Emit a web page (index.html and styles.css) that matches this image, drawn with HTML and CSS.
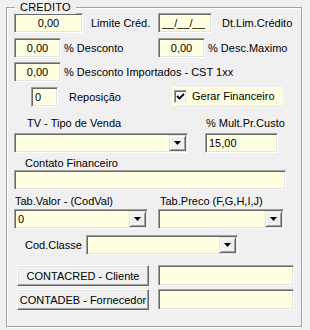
FILE: index.html
```html
<!DOCTYPE html>
<html>
<head>
<meta charset="utf-8">
<link rel="stylesheet" href="styles.css">
</head>
<body>
<div class="group">
  <span class="legend">CREDITO</span>

  <div class="row r1 split">
    <div class="cell">
      <div class="field center w69">0,00</div>
      <span class="lbl ml8">Limite Créd.</span>
    </div>
    <div class="cell">
      <div class="field w54">__/__/__</div>
      <span class="lbl ml10">Dt.Lim.Crédito</span>
    </div>
  </div>

  <div class="row r2 split">
    <div class="cell">
      <div class="field center w47">0,00</div>
      <span class="lbl ml3">% Desconto</span>
    </div>
    <div class="cell">
      <div class="field center w47">0,00</div>
      <span class="lbl ml3">% Desc.Maximo</span>
    </div>
  </div>

  <div class="row r3">
    <div class="field center w47">0,00</div>
    <span class="lbl ml3">% Desconto Importados - CST 1xx</span>
  </div>

  <div class="row r4 split4">
    <div class="cell">
      <div class="field w27 ml17">0</div>
      <span class="lbl ml11">Reposição</span>
    </div>
    <div class="check">
      <span class="box"><svg width="9" height="9" viewBox="0 0 9 9"><path d="M1 4 L3.5 6.5 L8 2" fill="none" stroke="#000" stroke-width="1.8"/></svg></span>
      <span class="lbl">Gerar Financeiro</span>
    </div>
  </div>

  <div class="row r5 split5 lblrow">
    <span class="lbl pl13">TV - Tipo de Venda</span>
    <span class="lbl pl1">% Mult.Pr.Custo</span>
  </div>

  <div class="row r6 split5">
    <div class="combo w174"><span class="val"></span><span class="arrow"><svg width="7" height="4" viewBox="0 0 7 4"><path d="M0 0H7L3.5 4Z"/></svg></span></div>
    <div class="field w73">15,00</div>
  </div>

  <div class="row r7 lblrow">
    <span class="lbl pl11">Contato Financeiro</span>
  </div>

  <div class="row r8">
    <div class="field w272"></div>
  </div>

  <div class="row r9 split lblrow">
    <span class="lbl pl1">Tab.Valor - (CodVal)</span>
    <span class="lbl pl2">Tab.Preco (F,G,H,I,J)</span>
  </div>

  <div class="row r10 split">
    <div class="combo w134"><span class="val">0</span><span class="arrow"><svg width="7" height="4" viewBox="0 0 7 4"><path d="M0 0H7L3.5 4Z"/></svg></span></div>
    <div class="combo w126"><span class="val"></span><span class="arrow"><svg width="7" height="4" viewBox="0 0 7 4"><path d="M0 0H7L3.5 4Z"/></svg></span></div>
  </div>

  <div class="row r11 split11">
    <span class="lbl pl11">Cod.Classe</span>
    <div class="combo w152"><span class="val"></span><span class="arrow"><svg width="7" height="4" viewBox="0 0 7 4"><path d="M0 0H7L3.5 4Z"/></svg></span></div>
  </div>

  <div class="row r12 split">
    <button class="btn ml3">CONTACRED - Cliente</button>
    <div class="field w136 h21"></div>
  </div>

  <div class="row r13 split">
    <button class="btn ml3">CONTADEB - Fornecedor</button>
    <div class="field w136 h21"></div>
  </div>
</div>
</body>
</html>
```
FILE: styles.css
```css
html, body {
  margin: 0;
  padding: 0;
}
body {
  width: 310px;
  height: 330px;
  overflow: hidden;
  background: #f0f0f0;
  font-family: "Liberation Sans", Arial, sans-serif;
  font-size: 11px;
  color: #000;
}
.group {
  position: relative;
  box-sizing: border-box;
  margin: 7px 0 0 6px;
  width: 296px;
  height: 320px;
  border: 1px solid #a0a0a0;
  box-shadow: inset 1px 1px #fff, 1px 1px #fff;
  padding: 5px 0 0 7px;
}
.legend {
  position: absolute;
  top: -8px;
  left: 8px;
  padding: 0 5px;
  line-height: 14px;
  background: #f0f0f0;
  letter-spacing: 0.2px;
}
.row {
  display: flex;
  align-items: center;
}
.split { display: grid; grid-template-columns: 144px auto; align-items: center; }
.split4 { display: grid; grid-template-columns: 158px auto; align-items: start; }
.split5 { display: grid; grid-template-columns: 191px auto; align-items: center; }
.split11 { display: grid; grid-template-columns: 72px auto; align-items: center; }
.cell { display: flex; align-items: center; }
.lblrow { height: 13px; line-height: 13px; }

.r2 { margin-top: 5px; }
.r3 { margin-top: 4px; }
.r4 { margin-top: 5px; }
.r5 { margin-top: 10px; }
.r6 { margin-top: 3px; }
.r7 { margin-top: 4px; }
.r8 { margin-top: 0; }
.r9 { margin-top: 5px; }
.r10 { margin-top: 1px; }
.r11 { margin-top: 6px; }
.r12 { margin-top: 10px; }
.r13 { margin-top: 3px; }

.lbl { white-space: nowrap; }
.ml3 { margin-left: 3px; }
.ml8 { margin-left: 8px; }
.ml10 { margin-left: 10px; }
.ml11 { margin-left: 11px; }
.ml17 { margin-left: 17px; }
.pl1 { padding-left: 1px; }
.pl2 { padding-left: 2px; }
.pl11 { padding-left: 11px; }
.pl13 { padding-left: 13px; }

.field, .combo {
  box-sizing: border-box;
  height: 20px;
  background: #ffffe1;
  border: 1px solid;
  border-color: #a0a0a0 #fff #fff #a0a0a0;
  box-shadow: inset 1px 1px #696969, inset -1px -1px #e3e3e3;
  display: flex;
  align-items: center;
  padding: 0 3px;
  white-space: nowrap;
}
.field.center { justify-content: center; padding: 0; }
.h21 { height: 21px; }
.w27 { width: 27px; }
.w47 { width: 47px; }
.w54 { width: 54px; }
.w69 { width: 69px; }
.w73 { width: 73px; }
.w126 { width: 126px; }
.w134 { width: 134px; }
.w136 { width: 136px; }
.w152 { width: 152px; }
.w174 { width: 174px; }
.w272 { width: 272px; }

.combo {
  padding: 1px 1px 1px 3px;
  justify-content: space-between;
}
.combo .val { flex: 1; }
.arrow {
  box-sizing: border-box;
  width: 17px;
  height: 16px;
  background: #f0f0f0;
  border: 1px solid;
  border-color: #e3e3e3 #696969 #696969 #e3e3e3;
  box-shadow: inset 1px 1px #fff, inset -1px -1px #a0a0a0;
  display: flex;
  align-items: center;
  justify-content: center;
}
.arrow svg { display: block; fill: #000; }

.check {
  box-sizing: border-box;
  width: 111px;
  height: 18px;
  background: #ffffe1;
  display: flex;
  align-items: center;
  padding-left: 2px;
}
.box {
  box-sizing: border-box;
  width: 13px;
  height: 13px;
  background: #fff;
  border: 1px solid;
  border-color: #a0a0a0 #fff #fff #a0a0a0;
  box-shadow: inset 1px 1px #696969, inset -1px -1px #e3e3e3;
  display: flex;
  align-items: center;
  justify-content: center;
  margin-right: 5px;
}
.box svg { display: block; }

.btn {
  box-sizing: border-box;
  width: 132px;
  height: 21px;
  padding: 0;
  margin-right: 0;
  font-family: "Liberation Sans", Arial, sans-serif;
  font-size: 11px;
  color: #000;
  background: #f0f0f0;
  border: 1px solid;
  border-color: #fff #696969 #696969 #fff;
  box-shadow: inset -1px -1px #a0a0a0, inset 1px 1px #e3e3e3;
  white-space: nowrap;
  text-align: center;
}
```
